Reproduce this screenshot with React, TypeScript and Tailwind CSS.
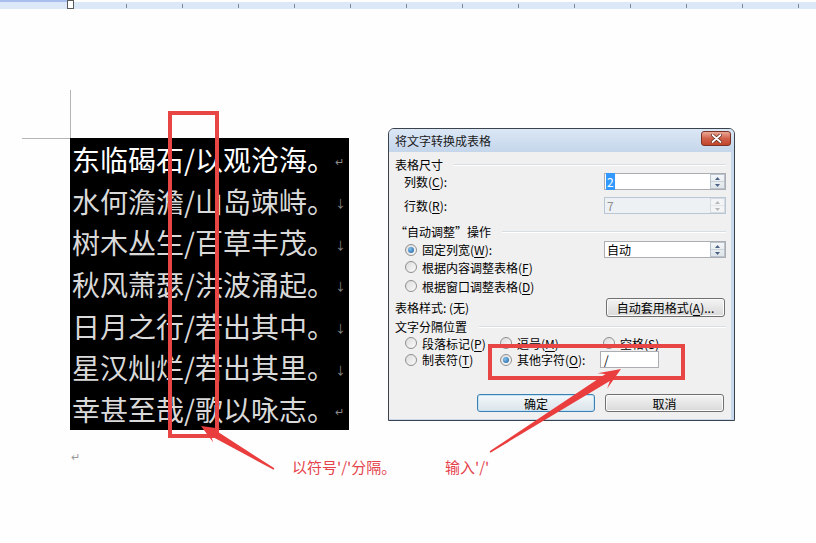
import React from "react";

const font = "font-['Noto_Sans_CJK_SC','Noto_Sans',sans-serif]";

const poem = [
  { text: "东临碣石/以观沧海。", mark: "↵" },
  { text: "水何澹澹/山岛竦峙。", mark: "↓" },
  { text: "树木丛生/百草丰茂。", mark: "↓" },
  { text: "秋风萧瑟/洪波涌起。", mark: "↓" },
  { text: "日月之行/若出其中。", mark: "↓" },
  { text: "星汉灿烂/若出其里。", mark: "↓" },
  { text: "幸甚至哉/歌以咏志。", mark: "↵" },
];

const ticks = Array.from({ length: 13 }, (_, i) => i);

// tapered screenshot-style arrow, tail -> tip
function arrowPoints(x1: number, y1: number, x2: number, y2: number, headLen: number, headHalf: number, neckHalf: number, tailHalf: number) {
  const dx = x2 - x1;
  const dy = y2 - y1;
  const len = Math.hypot(dx, dy);
  const ux = dx / len;
  const uy = dy / len;
  const nx = -uy;
  const ny = ux;
  const bx = x2 - ux * headLen;
  const by = y2 - uy * headLen;
  const kx = x2 - ux * headLen * 0.72;
  const ky = y2 - uy * headLen * 0.72;
  const pts = [
    [x1 + nx * tailHalf, y1 + ny * tailHalf],
    [kx + nx * neckHalf, ky + ny * neckHalf],
    [bx + nx * headHalf, by + ny * headHalf],
    [x2, y2],
    [bx - nx * headHalf, by - ny * headHalf],
    [kx - nx * neckHalf, ky - ny * neckHalf],
    [x1 - nx * tailHalf, y1 - ny * tailHalf],
  ];
  return pts.map(p => `${p[0].toFixed(1)},${p[1].toFixed(1)}`).join(" ");
}

const Key = ({ k }: { k: string }) => (
  <span>(<span className="underline underline-offset-2">{k}</span>)</span>
);

const Spinner = ({ disabled = false }: { disabled?: boolean }) => (
  <div className={`w-[15px] h-[15px] flex flex-col border ${disabled ? "border-[#d6dbe0] bg-[#f2f4f6]" : "border-[#b9c3cd] bg-gradient-to-b from-[#f4f6f8] to-[#dfe5ea]"}`}>
    <div className="flex-1 flex items-center justify-center">
      <svg width="5" height="3" viewBox="0 0 5 3"><path d="M0 3 L2.5 0 L5 3 Z" fill={disabled ? "#b8b8b8" : "#4d6185"} /></svg>
    </div>
    <div className={`h-px ${disabled ? "bg-[#e2e6ea]" : "bg-[#c9d1d9]"}`} />
    <div className="flex-1 flex items-center justify-center">
      <svg width="5" height="3" viewBox="0 0 5 3"><path d="M0 0 L2.5 3 L5 0 Z" fill={disabled ? "#b8b8b8" : "#4d6185"} /></svg>
    </div>
  </div>
);

const SpinBox = ({ value, selected = false, disabled = false }: { value: string; selected?: boolean; disabled?: boolean }) => (
  <div className={`ml-auto w-[122px] h-[17px] flex items-center border ${disabled ? "border-[#b8c6d6] bg-[#eef1f4]" : "border-[#abadb3] bg-white"}`}>
    <div className="flex-1 pl-[1px] leading-[15px]">
      <span className={selected ? "bg-[#3399ff] text-white px-[1px]" : disabled ? "text-[#8d8d8d] px-[1px]" : "px-[1px]"}>{value}</span>
    </div>
    <Spinner disabled={disabled} />
  </div>
);

const Radio = ({ checked = false }: { checked?: boolean }) => (
  <span className="w-[12px] h-[12px] rounded-full border border-[#8f8f8f] bg-gradient-to-br from-[#dcdcdc] to-[#fbfbfb] flex items-center justify-center shrink-0">
    {checked && <span className="w-[6px] h-[6px] rounded-full bg-[radial-gradient(circle_at_35%_35%,#7fc2f0,#1d5a95)]" />}
  </span>
);

const RadioItem = ({ label, checked = false, className = "" }: { label: React.ReactNode; checked?: boolean; className?: string }) => (
  <div className={`flex items-center gap-[5px] ${className}`}>
    <Radio checked={checked} />
    <span className="whitespace-nowrap">{label}</span>
  </div>
);

const GroupHeader = ({ title, gap, className = "" }: { title: React.ReactNode; gap: string; className?: string }) => (
  <div className={`flex items-center h-[17px] ${className}`}>
    <span className="whitespace-nowrap">{title}</span>
    <div className={`flex-1 ${gap} border-t border-[#d5dfe5] border-b border-b-white h-[2px]`} />
  </div>
);

const WinButton = ({ children, focused = false, className = "" }: { children: React.ReactNode; focused?: boolean; className?: string }) => (
  <div
    className={`flex items-center justify-center rounded-[3px] border ${
      focused
        ? "border-[#3c7fb1] bg-gradient-to-b from-[#f3f8fb] to-[#dbe4ea] shadow-[inset_0_0_0_1px_#c4e4f6]"
        : "border-[#707070] bg-gradient-to-b from-[#f4f4f4] to-[#d9d9d9] shadow-[inset_0_0_0_1px_#fbfbfb]"
    } ${className}`}
  >
    {children}
  </div>
);

const Dialog = () => (
  <div className={`ml-[39px] w-[347px] h-[293px] flex flex-col border border-[#3a424c] rounded-t-[6px] bg-[#c8d9ed] ${font} text-[12px] text-black`}>
    <div className="h-[23px] flex items-start pl-[6px] pr-[3px] rounded-t-[5px] bg-gradient-to-b from-[#dbe7f5] to-[#c5d6eb]">
      <span className="mt-[3px] leading-[17px] text-[#1a1a1a]">将文字转换成表格</span>
      <div className="ml-auto mt-[2px] w-[30px] h-[15px] rounded-[3px] border border-[#7a3325] bg-gradient-to-b from-[#e9a897] via-[#d0604a] to-[#c2432b] flex items-center justify-center">
        <svg width="11" height="9" viewBox="0 0 11 9">
          <path d="M1.5 1 L9.5 8 M9.5 1 L1.5 8" stroke="#5a2218" strokeWidth="3.2" strokeLinecap="round" />
          <path d="M1.5 1 L9.5 8 M9.5 1 L1.5 8" stroke="#ffffff" strokeWidth="1.8" strokeLinecap="round" />
        </svg>
      </div>
    </div>
    <div className="h-[267px] mr-[3px] bg-[#f0f0f0] pl-[6px] pr-[5px] flex flex-col leading-[17px]">
      <GroupHeader title="表格尺寸" gap="ml-[11px]" className="mt-[4px]" />
      <div className="h-[17px] flex items-center pl-[9px]">
        <span>列数<Key k="C" />:</span>
        <SpinBox value="2" selected />
      </div>
      <div className="h-[17px] mt-[7px] flex items-center pl-[9px]">
        <span>行数<Key k="R" />:</span>
        <SpinBox value="7" disabled />
      </div>
      <GroupHeader title="“自动调整”操作" gap="ml-[11px]" className="mt-[9px]" />
      <div className="h-[17px] mt-[1px] flex items-center pl-[10px]">
        <RadioItem checked label={<span>固定列宽<Key k="W" />:</span>} />
        <SpinBox value="自动" />
      </div>
      <div className="h-[18px] flex items-center pl-[10px]">
        <RadioItem label={<span>根据内容调整表格<Key k="F" /></span>} />
      </div>
      <div className="h-[18px] mt-[1px] flex items-center pl-[10px]">
        <RadioItem label={<span>根据窗口调整表格<Key k="D" /></span>} />
      </div>
      <div className="h-[19px] mt-[3px] flex items-center">
        <span>表格样式: (无)</span>
        <WinButton className="ml-auto mr-[1px] w-[119px] h-[19px]">
          <span>自动套用格式<Key k="A" />...</span>
        </WinButton>
      </div>
      <GroupHeader title="文字分隔位置" gap="ml-[12px]" className="mt-[1px]" />
      <div className="h-[16px] flex items-center pl-[10px]">
        <RadioItem className="w-[95px]" label={<span>段落标记<Key k="P" /></span>} />
        <RadioItem className="w-[103px]" label={<span>逗号<Key k="M" /></span>} />
        <RadioItem label={<span>空格<Key k="S" /></span>} />
      </div>
      <div className="h-[17px] flex items-center pl-[10px]">
        <RadioItem className="w-[95px]" label={<span>制表符<Key k="T" /></span>} />
        <RadioItem checked className="w-[100px]" label={<span>其他字符<Key k="O" />:</span>} />
        <div className="w-[59px] h-[17px] border border-[#abadb3] bg-white pl-[3px] leading-[15px]">/</div>
      </div>
      <div className="mt-[26px] h-[18px] flex pl-[82px] gap-[10px]">
        <WinButton focused className="w-[118px] h-[18px]">确定</WinButton>
        <WinButton className="w-[119px] h-[18px]">取消</WinButton>
      </div>
    </div>
    <div className="h-px mr-[3px] bg-[#c8d9ed]" />
  </div>
);

export default function App() {
  return (
    <div className={`relative w-[816px] h-[543px] overflow-hidden bg-[#fefefe] ${font}`}>
      {/* ruler */}
      <div className="h-[9px] flex">
        <div className="w-[67px] flex flex-col">
          <div className="h-[2px] bg-[#a8bfee]" />
          <div className="flex-1 bg-[#dce7f7]" />
        </div>
        <div className="w-[7px] border border-[#5a5a5a] bg-white" />
        <div className="flex-1 flex flex-col">
          <div className="h-[2px]" />
          <div className="flex-1 bg-[#dce7f7] flex items-center pl-[52px] gap-[55px]">
            {ticks.map(t => (
              <div key={t} className="w-px h-[4px] bg-[#7b8696] shrink-0" />
            ))}
          </div>
        </div>
      </div>

      <div className="mt-[119px] flex items-start">
        {/* document text */}
        <div className="ml-[70px] mt-[10px] flex flex-col">
          <div className="relative">
            <div className="absolute left-[-48px] top-0 w-[48px] h-px bg-[#b5b5b5]" />
            <div className="absolute left-0 top-[-48px] w-px h-[48px] bg-[#b5b5b5]" />
            <div className="w-[279px] h-[292px] bg-black flex flex-col">
              {poem.map((line, i) => (
                <div key={i} className="h-[41.7px] flex items-center pl-[2px] pr-[5px]">
                  <span className={`text-[28px] leading-none whitespace-nowrap ${i === 0 ? "text-white" : "text-[#d9d9d9]"}`}>{line.text}</span>
                  <span className="ml-auto text-[11px] text-[#8c8c8c] leading-none mt-[6px]">{line.mark}</span>
                </div>
              ))}
            </div>
          </div>
          <span className="mt-[20px] ml-[1px] text-[11px] leading-[12px] text-[#9a9a9a]">↵</span>
        </div>

        <Dialog />
      </div>

      {/* annotations */}
      <div className="absolute left-[168px] top-[111px] w-[51px] h-[327px] border-[4px] border-[#e84545]" />
      <div className="absolute left-[488px] top-[344px] w-[197px] h-[36px] border-[4px] border-[#e84545]" />
      <svg className="absolute left-0 top-0 pointer-events-none" width="816" height="543">
        <polygon points={arrowPoints(274, 469, 201, 426, 19, 8, 3.6, 0.8)} fill="#ea3d3d" />
        <polygon points={arrowPoints(490, 452, 621, 369, 22, 9, 4, 0.8)} fill="#ea3d3d" />
      </svg>
      <span className="absolute left-[292px] top-[457px] text-[15px] leading-[20px] text-[#e5434b] whitespace-nowrap">以符号'/'分隔。</span>
      <span className="absolute left-[445px] top-[457px] text-[15px] leading-[20px] text-[#e5434b] whitespace-nowrap">输入'/'</span>
    </div>
  );
}
